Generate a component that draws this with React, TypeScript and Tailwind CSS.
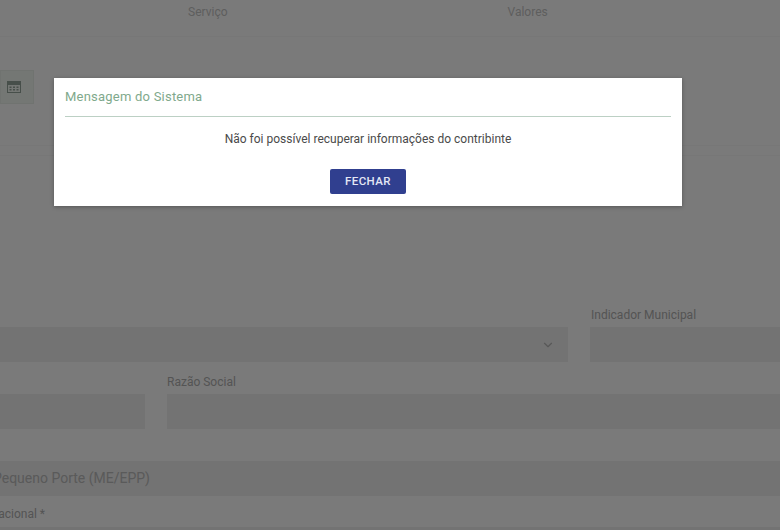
import { ChevronDown } from "lucide-react"

function Field({ className = "", children }: { className?: string; children?: React.ReactNode }) {
  return <div className={`h-[35px] bg-[#e6e6e6] ${className}`}>{children}</div>
}

export default function App() {
  return (
    <div className="relative h-[530px] w-[780px] overflow-hidden bg-[#f5f5f5] font-['Roboto',sans-serif]">
      {/* Page behind the overlay */}
      <div className="flex h-[37px] items-end border-b border-[#efefef] pb-[17px] text-[12px] leading-[14px] text-[#bcbcbc]">
        <span className="ml-[188px]">Serviço</span>
        <span className="ml-[280px]">Valores</span>
      </div>

      {/* Date button */}
      <div className="mt-[33px] flex h-[34px] w-[34px] items-center justify-center border border-[#e0e6e0] bg-[#e8efe8] pr-[6px]">
        <svg viewBox="0 0 14 12" className="h-[12px] w-[14px] text-[#8f9f95]" fill="currentColor">
          <path d="M0 0h14v12H0z M1 4v7h12V4z" fillRule="evenodd" />
          <path d="M2.5 5.5h2v1.5h-2zM6 5.5h2v1.5H6zM9.5 5.5h2v1.5h-2zM2.5 8h2v1.5h-2zM6 8h2v1.5H6zM9.5 8h2v1.5h-2z" />
        </svg>
      </div>

      <div className="mt-[41px] h-[11px] border-y border-[#eeeeee]" />

      <div className="mt-[152px] flex items-end gap-[22px]">
        <div className="flex h-[35px] w-[568px] items-center justify-end bg-[#e6e6e6] pr-[13px]">
          <ChevronDown className="h-[14px] w-[14px] text-[#b0b0b0]" />
        </div>
        <div className="flex-1">
          <div className="mb-[5px] pl-px text-[12px] leading-[14px] text-[#a8a8a8]">Indicador Municipal</div>
          <Field />
        </div>
      </div>

      <div className="mt-[13px] flex items-end gap-[22px]">
        <Field className="w-[145px]" />
        <div className="flex-1">
          <div className="mb-[5px] text-[12px] leading-[14px] text-[#a8a8a8]">Razão Social</div>
          <Field />
        </div>
      </div>

      <Field className="mt-[32px] flex items-center justify-start overflow-hidden whitespace-nowrap text-[14px] text-[#b4b4b4]">
        <span className="-ml-[150px] w-[300px] text-right">Microempresa e Pequeno Porte (ME/EPP)</span>
      </Field>

      <div className="mt-[11px] overflow-hidden whitespace-nowrap text-[12px] leading-[14px] text-[#a8a8a8]">
        <span className="-ml-[80px] inline-block w-[125px] text-right">Simples Nacional *</span>
      </div>
      <Field className="mt-[6px]" />

      {/* Overlay */}
      <div className="absolute inset-0 bg-black/50" />

      {/* Modal */}
      <div className="absolute left-[54px] top-[78px] h-[128px] w-[628px] bg-white px-[11px] shadow-[0_1px_4px_rgba(0,0,0,0.3)]">
        <div className="h-[39px] border-b border-[#bcd0c4] pt-[11px] text-[13px] leading-[16px] tracking-[0.22px] text-[#7fa98c]">
          Mensagem do Sistema
        </div>
        <p className="mt-[15px] text-center text-[12px] leading-[14px] text-[#4a4a4a]">
          Não foi possível recuperar informações do contribinte
        </p>
        <div className="mt-[23px] flex justify-center">
          <button className="h-[25px] w-[76px] rounded-[2px] bg-[#303f8f] text-[11.5px] font-medium tracking-[0.4px] text-[#e4e7f5]">
            FECHAR
          </button>
        </div>
      </div>
    </div>
  )
}
